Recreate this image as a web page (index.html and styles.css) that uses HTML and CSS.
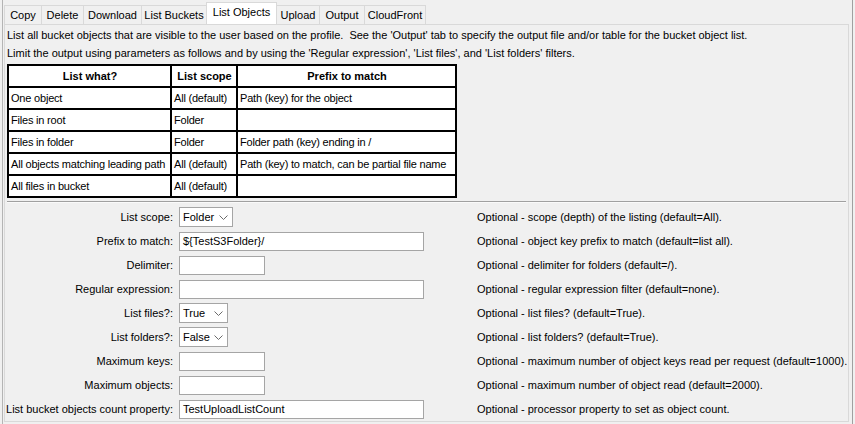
FILE: index.html
```html
<!DOCTYPE html>
<html>
<head>
<meta charset="utf-8">
<link rel="stylesheet" href="styles.css">
</head>
<body>
<div class="window">
  <div class="tabs">
    <div class="tab t-copy">Copy</div>
    <div class="tab t-delete">Delete</div>
    <div class="tab t-download">Download</div>
    <div class="tab t-buckets">List Buckets</div>
    <div class="tab t-objects active">List Objects</div>
    <div class="tab t-upload">Upload</div>
    <div class="tab t-output">Output</div>
    <div class="tab t-cloud">CloudFront</div>
  </div>
  <div class="panel">
    <p class="desc">List all bucket objects that are visible to the user based on the profile.&nbsp; See the 'Output' tab to specify the output file and/or table for the bucket object list.</p>
    <p class="desc">Limit the output using parameters as follows and by using the 'Regular expression', 'List files', and 'List folders' filters.</p>
    <table class="info">
      <colgroup><col class="c1"><col class="c2"><col class="c3"></colgroup>
      <tr><th>List what?</th><th>List scope</th><th>Prefix to match</th></tr>
      <tr><td>One object</td><td>All (default)</td><td>Path (key) for the object</td></tr>
      <tr><td>Files in root</td><td>Folder</td><td></td></tr>
      <tr><td>Files in folder</td><td>Folder</td><td>Folder path (key) ending in /</td></tr>
      <tr><td>All objects matching leading path</td><td>All (default)</td><td>Path (key) to match, can be partial file name</td></tr>
      <tr><td>All files in bucket</td><td>All (default)</td><td></td></tr>
    </table>
    <div class="sep"></div>
    <div class="form">
      <div class="row">
        <div class="lbl">List scope:</div>
        <div class="field"><div class="select s-scope"><span>Folder</span><svg class="chev" width="9" height="5" viewBox="0 0 9 5"><path d="M0.5 0.5 L4.5 4.5 L8.5 0.5" fill="none" stroke="#6a6a6a" stroke-width="1"/></svg></div></div>
        <div class="help">Optional - scope (depth) of the listing (default=All).</div>
      </div>
      <div class="row">
        <div class="lbl">Prefix to match:</div>
        <div class="field"><div class="input wide">${TestS3Folder}/</div></div>
        <div class="help">Optional - object key prefix to match (default=list all).</div>
      </div>
      <div class="row">
        <div class="lbl">Delimiter:</div>
        <div class="field"><div class="input short"></div></div>
        <div class="help">Optional - delimiter for folders (default=/).</div>
      </div>
      <div class="row">
        <div class="lbl">Regular expression:</div>
        <div class="field"><div class="input wide"></div></div>
        <div class="help">Optional - regular expression filter (default=none).</div>
      </div>
      <div class="row">
        <div class="lbl">List files?:</div>
        <div class="field"><div class="select s-bool"><span>True</span><svg class="chev" width="9" height="5" viewBox="0 0 9 5"><path d="M0.5 0.5 L4.5 4.5 L8.5 0.5" fill="none" stroke="#6a6a6a" stroke-width="1"/></svg></div></div>
        <div class="help">Optional - list files? (default=True).</div>
      </div>
      <div class="row">
        <div class="lbl">List folders?:</div>
        <div class="field"><div class="select s-bool"><span>False</span><svg class="chev" width="9" height="5" viewBox="0 0 9 5"><path d="M0.5 0.5 L4.5 4.5 L8.5 0.5" fill="none" stroke="#6a6a6a" stroke-width="1"/></svg></div></div>
        <div class="help">Optional - list folders? (default=True).</div>
      </div>
      <div class="row">
        <div class="lbl">Maximum keys:</div>
        <div class="field"><div class="input short"></div></div>
        <div class="help">Optional - maximum number of object keys read per request (default=1000).</div>
      </div>
      <div class="row">
        <div class="lbl">Maximum objects:</div>
        <div class="field"><div class="input short"></div></div>
        <div class="help">Optional - maximum number of object read (default=2000).</div>
      </div>
      <div class="row">
        <div class="lbl">List bucket objects count property:</div>
        <div class="field"><div class="input wide">TestUploadListCount</div></div>
        <div class="help">Optional - processor property to set as object count.</div>
      </div>
    </div>
  </div>
</div>
</body>
</html>
```
FILE: styles.css
```css
html, body {
  margin: 0;
  padding: 0;
  background: #f0f0f0;
}
body {
  font-family: "Liberation Sans", Arial, sans-serif;
  font-size: 11px;
  color: #000;
  width: 855px;
  height: 424px;
  overflow: hidden;
}
.window {
  margin-left: 2px;
  width: 851px;
  height: 424px;
  border-left: 1px solid #b4b4b4;
  border-right: 1px solid #a0a0a0;
  box-sizing: border-box;
}
.tabs {
  display: flex;
  align-items: flex-end;
  height: 24px;
  padding-left: 1px;
}
.tab {
  box-sizing: border-box;
  height: 19px;
  border: 1px solid #d9d9d9;
  border-bottom: none;
  border-right: none;
  background: #f0f0f0;
  text-align: center;
  line-height: 19px;
  white-space: nowrap;
}
.tab.t-cloud { border-right: 1px solid #d9d9d9; }
.tab.active {
  height: 22px;
  line-height: 19px;
  background: #fff;
  border-right: 1px solid #d9d9d9;
  margin-right: -1px;
  position: relative;
  z-index: 1;
}
.t-copy { width: 37px; }
.t-delete { width: 42px; }
.t-download { width: 58px; }
.t-buckets { width: 65px; }
.t-objects { width: 71px; }
.t-upload { width: 43px; }
.t-output { width: 45px; }
.t-cloud { width: 62px; }

.panel {
  margin-left: 1px;
  width: 845px;
  height: 398px;
  box-sizing: border-box;
  border: 1px solid #d9d9d9;
  background: #f0f0f0;
  padding: 1px 0 0 2px;
}
.desc {
  margin: 0;
  line-height: 18px;
  white-space: nowrap;
}
.info {
  margin-top: 2px;
  width: 450px;
  table-layout: fixed;
  border: 1px solid #000;
  border-spacing: 0;
  background: #fff;
}
.info col.c1 { width: 163px; }
.info col.c2 { width: 66px; }
.info col.c3 { width: 219px; }
.info th, .info td {
  border: 1px solid #000;
  height: 20px;
  padding: 0 1px 0 2px;
  white-space: nowrap;
  overflow: hidden;
  text-align: left;
  font-weight: normal;
  letter-spacing: -0.2px;
}
.info th {
  font-weight: bold;
  text-align: center;
  letter-spacing: 0;
}
.sep {
  margin: 3px 0 2px 0;
  width: 839px;
  height: 1px;
  background: #a0a0a0;
  border-bottom: 1px solid #fafafa;
}
.form {
  margin-left: -2px;
}
.row {
  display: flex;
  align-items: center;
  height: 24px;
}
.lbl {
  width: 168px;
  text-align: right;
  white-space: nowrap;
  flex: none;
}
.field {
  width: 298px;
  margin-left: 6px;
  flex: none;
  display: flex;
  align-items: center;
}
.help {
  white-space: nowrap;
}
.input {
  box-sizing: border-box;
  height: 19px;
  line-height: 17px;
  border: 1px solid #a5a5a5;
  background: #fff;
  padding: 0 3px;
}
.input.wide { width: 245px; }
.input.short { width: 86px; }
.select {
  box-sizing: border-box;
  height: 20px;
  border: 1px solid #a5a5a5;
  background: #fff;
  display: flex;
  align-items: center;
  justify-content: space-between;
  padding: 0 4px 0 3px;
}
.s-scope { width: 54px; }
.s-bool { width: 49px; }
.chev { display: block; margin-top: 1px; }
```
